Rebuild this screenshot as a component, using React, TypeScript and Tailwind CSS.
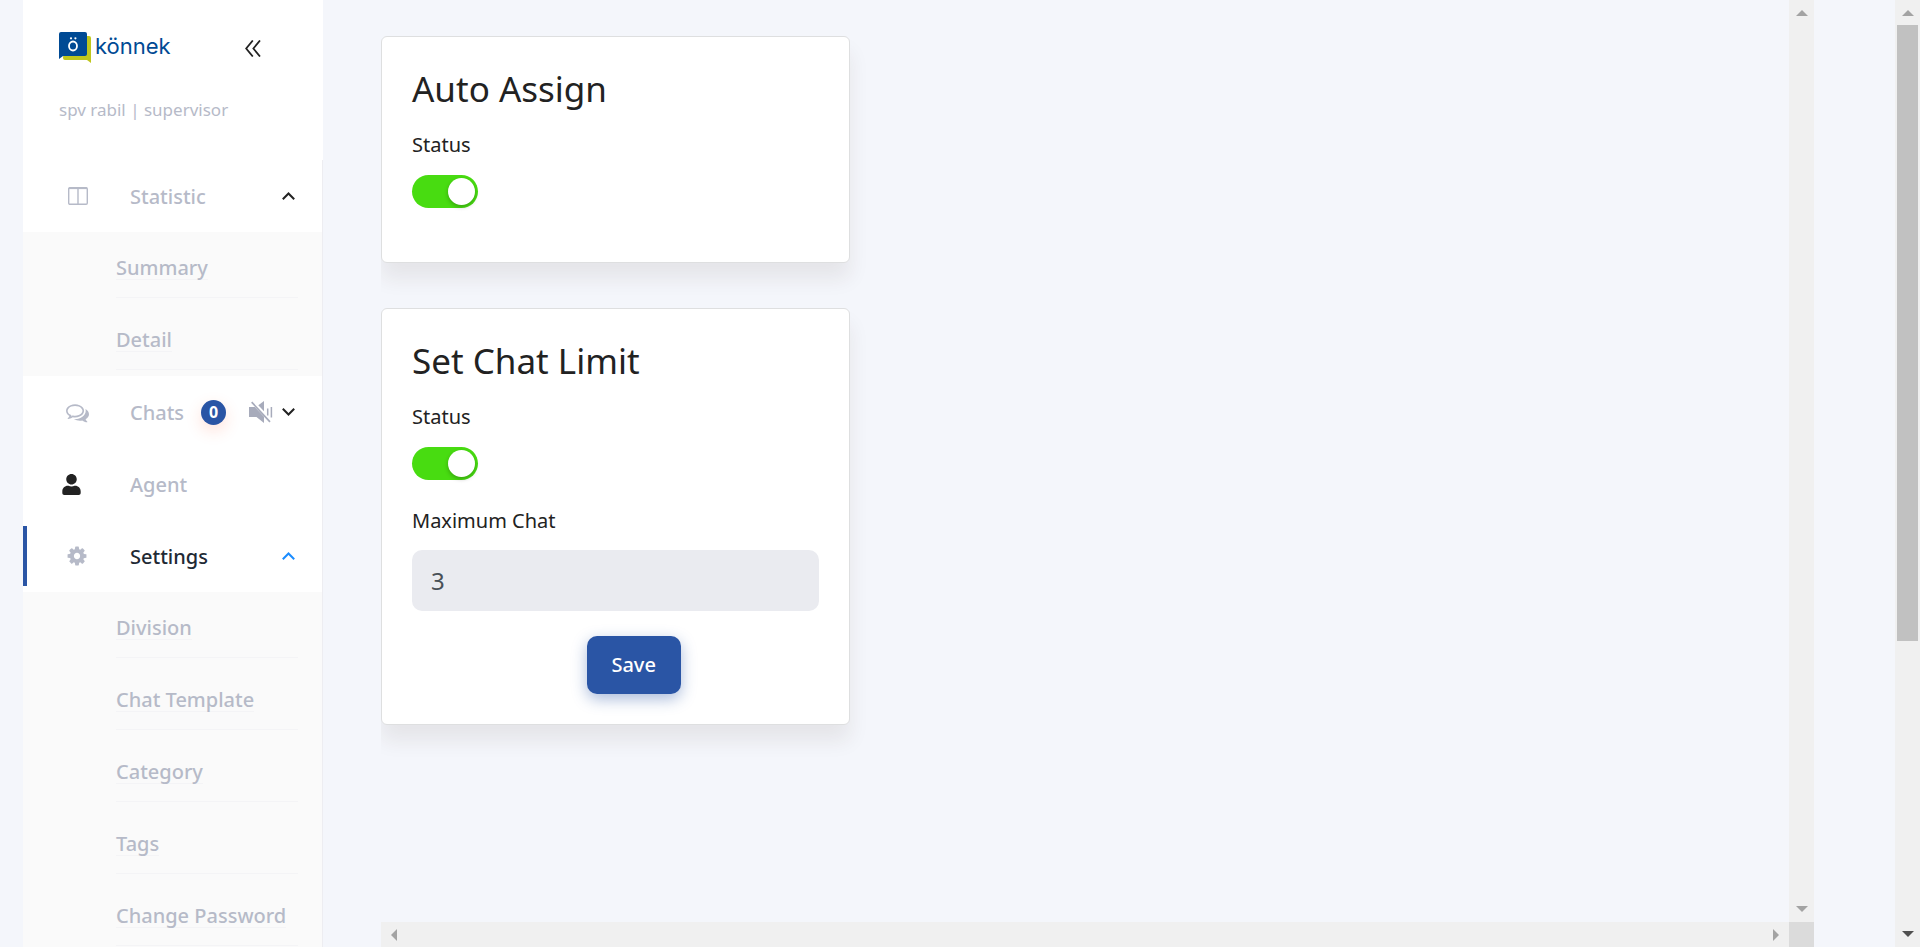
import { useState, type ReactNode } from "react";
import { FaUser } from "react-icons/fa";

function Logo() {
  return (
    <a href="#home" aria-label="könnek" className="flex items-start gap-1 text-[#004a94]">
      <svg width="32" height="32" viewBox="0 0 32 32" aria-hidden="true">
        <path d="M6 4h24a2 2 0 0 1 2 2v25l-4-3H6a2 2 0 0 1-2-2z" fill="#bfc61d" />
        <path d="M2 0h24a2 2 0 0 1 2 2v20a2 2 0 0 1-2 2H4l-4 3V2a2 2 0 0 1 2-2z" fill="#004a94" />
        <ellipse cx="14" cy="14" rx="4" ry="4.5" fill="none" stroke="#fff" strokeWidth="1.8" />
        <circle cx="12" cy="6.3" r="1.1" fill="#fff" />
        <circle cx="16.4" cy="6.3" r="1.1" fill="#fff" />
      </svg>
      <span className="font-[Inter,sans-serif] text-[22px] leading-7">könnek</span>
    </a>
  );
}

function ColumnsIcon() {
  return (
    <svg width="20" height="18" viewBox="0 0 20 18" fill="none" stroke="currentColor" aria-hidden="true">
      <rect x="0.7" y="0.7" width="18.6" height="16.6" rx="1.2" strokeWidth="1.4" />
      <path d="M1 1.2h18" strokeWidth="1.8" />
      <path d="M10 1v16" strokeWidth="1.4" />
    </svg>
  );
}

function CommentsIcon() {
  return (
    <svg width="23" height="23" viewBox="0 0 1792 1792" fill="currentColor" aria-hidden="true">
      <path d="M704 384q-153 0-286 52t-211.5 141-78.5 191q0 82 53 158t149 132l97 56-35 84q34-20 62-39l44-31 53 10q78 14 153 14 153 0 286-52t211.5-141 78.5-191-78.5-191-211.5-141-286-52zm0-128q191 0 353.5 68.5t256.5 186.5 94 257-94 257-256.5 186.5-353.5 68.5q-86 0-176-16-124 88-278 128-36 9-86 16h-3q-11 0-20.5-8t-11.5-21q-1-3-1-6.5t.5-6.5 2-6l2.5-5 3.5-5.500 4-5 4.500-5 4-4.500q5-6 23-25t26-29.500 22.500-29 25-38.500 20.500-44q-124-72-195-177t-71-224q0-139 94-257t256.500-186.500 353.500-68.500zm822 1169q10 24 20.500 44t25 38.500 22.500 29 26 29.500 23 25q1 1 4 4.500t4.500 5 4 5 3.500 5.500l2.500 5 2 6 .5 6.500-1 6.500q-3 14-13 22t-22 7q-50-7-86-16-154-40-278-128-90 16-176 16-271 0-472-132 58 4 88 4 161 0 309-45t264-129q125-92 192-212t67-254q0-77-23-152 129 71 204 178t75 230q0 120-71 224.500t-195 176.500z" />
    </svg>
  );
}

function CogIcon() {
  return (
    <svg width="22" height="22" viewBox="0 0 1792 1792" fill="currentColor" aria-hidden="true">
      <path d="M1152 896q0-106-75-181t-181-75-181 75-75 181 75 181 181 75 181-75 75-181zm512-109v222q0 12-8 23t-20 13l-185 28q-19 54-39 91 35 50 107 138 10 12 10 25t-9 23q-27 37-99 108t-94 71q-12 0-26-9l-138-108q-44 23-91 38-16 136-29 186-7 28-36 28h-222q-14 0-24.5-8.5t-11.5-21.5l-28-184q-49-16-90-37l-141 107q-10 9-25 9-14 0-25-11-126-114-165-168-7-10-7-23 0-12 8-23 15-21 51-66.5t54-70.5q-27-50-41-99l-183-27q-13-2-21-12.5t-8-23.5v-222q0-12 8-23t19-13l186-28q14-46 39-92-40-57-107-138-10-12-10-24 0-10 9-23 26-36 98.5-107.5t94.5-71.5q13 0 26 10l138 107q44-23 91-38 16-136 29-186 7-28 36-28h222q14 0 24.5 8.5t11.5 21.5l28 184q49 16 90 37l142-107q9-9 24-9 13 0 25 10 129 119 165 170 7 8 7 22 0 12-8 23-15 21-51 66.5t-54 70.5q26 50 41 98l183 28q13 2 21 12.5t8 23.5z" />
    </svg>
  );
}

function MuteIcon() {
  return (
    <svg width="24" height="22" viewBox="0 0 24 22" fill="currentColor" aria-hidden="true">
      <path d="M0 6h5.800L15 15.800V22l-7.500-6H0z" />
      <path d="M9.300 4.200 15 0v10.200z" />
      <path d="M2.700 1.200 21 20.800" fill="none" stroke="currentColor" strokeWidth="1.700" />
      <path d="M18.700 7.500v7M22.400 6v10.500" fill="none" stroke="currentColor" strokeWidth="1.500" />
    </svg>
  );
}

function Caret({ up = false }: { up?: boolean }) {
  return (
    <svg width="13" height="8" viewBox="0 0 13 8" fill="none" stroke="currentColor" strokeWidth="2" aria-hidden="true">
      <path d={up ? "M0.8 7.2 6.5 1.5l5.7 5.7" : "M0.8 0.8 6.5 6.5l5.7-5.7"} />
    </svg>
  );
}

type RowProps = { icon: ReactNode; label: string; active?: boolean; extra?: ReactNode; caret?: ReactNode };

function MenuRow({ icon, label, active = false, extra, caret }: RowProps) {
  return (
    <a
      href={`#${label.toLowerCase()}`}
      className={`my-1.5 flex h-[60px] items-center border-l-4 pr-[27px] ${
        active ? "border-[#2a55a5] text-[#212934]" : "border-transparent text-[#b6bac8]"
      }`}
    >
      <span className="flex w-[103px] shrink-0 items-center text-[#b6bac8]">{icon}</span>
      <span className="pt-0.5 font-medium">{label}</span>
      {extra}
      <span className={`ml-auto ${active ? "text-[#1a8cff]" : "text-[#222]"}`}>{caret}</span>
    </a>
  );
}

function SubMenu({ items }: { items: string[] }) {
  return (
    <ul className="bg-[#fafafa] pr-6 pl-[93px]">
      {items.map((item) => (
        <li key={item} className="py-1.5">
          <a
            href={`#${item.toLowerCase().replace(" ", "-")}`}
            className="flex h-[60px] items-center border-b border-[#f4f4f6] font-medium text-[#b6bac8]"
          >
            <span className="border-b border-[#f4f4f6] pt-0.5 leading-[22px]">{item}</span>
          </a>
        </li>
      ))}
    </ul>
  );
}

function Toggle({ id }: { id: string }) {
  const [on, setOn] = useState(true);
  return (
    <input
      id={id}
      type="checkbox"
      role="switch"
      checked={on}
      onChange={() => setOn(!on)}
      className="mt-[15px] flex h-[33px] w-[66px] cursor-pointer appearance-none items-center rounded-full bg-gray-300 p-[3px] before:size-[27px] before:rounded-full before:bg-white before:shadow-[0_2px_4px_rgba(0,0,0,0.25)] checked:justify-end checked:bg-[#48dc11]"
    />
  );
}

function Card({ title, children }: { title: string; children: ReactNode }) {
  return (
    <section className="w-1/3 rounded-md border border-[#dedfe0] bg-white p-[30px] shadow-[0_16px_20px_rgba(58,32,28,0.08)]">
      <h2 className="text-[35px] leading-[44px]">{title}</h2>
      {children}
    </section>
  );
}

function Arrow({ className }: { className: string }) {
  return (
    <svg width="12" height="12" viewBox="0 -3 12 12" fill="currentColor" aria-hidden="true" className={className}>
      <path d="M0 6 6 0l6 6z" />
    </svg>
  );
}

export default function App() {
  const [limit, setLimit] = useState("3");
  return (
    <div className="flex h-screen overflow-hidden bg-[#f4f6fb] font-['Noto_Sans',sans-serif] text-xl text-[#222]">
      <aside className="ml-[23px] w-[300px] shrink-0 overflow-hidden bg-white">
        <header className="h-40 pt-8 pl-9">
          <div className="flex h-[33px] items-start justify-between pr-[62px]">
            <Logo />
            <button type="button" aria-label="Collapse menu" className="mt-2">
              <svg width="16" height="17" viewBox="0 0 16 17" fill="none" stroke="#222" strokeWidth="1.8">
                <path d="M7.800.5 1.200 8.500l6.600 8M15 .5 8.400 8.500l6.600 8" />
              </svg>
            </button>
          </div>
          <p className="mt-[33px] text-[17px] leading-6 text-[#b6bac8]">spv rabil | supervisor</p>
        </header>
        <nav className="flex flex-col border-r border-[#ededf1]">
          <MenuRow icon={<span className="ml-[41px]"><ColumnsIcon /></span>} label="Statistic" caret={<Caret up />} />
          <SubMenu items={["Summary", "Detail"]} />
          <MenuRow
            icon={<span className="ml-[39px]"><CommentsIcon /></span>}
            label="Chats"
            extra={
              <>
                <span className="ml-[17px] flex size-[25px] items-center justify-center rounded-full bg-[#2a55a5] text-base font-bold text-white shadow-[0_6px_16px_rgba(255,90,50,0.18)]">
                  0
                </span>
                <span className="ml-[23px] text-[#a7abbb]"><MuteIcon /></span>
              </>
            }
            caret={<Caret />}
          />
          <MenuRow icon={<FaUser size={21} className="ml-[34px] text-[#222]" />} label="Agent" />
          <MenuRow icon={<span className="ml-[39px]"><CogIcon /></span>} label="Settings" active caret={<Caret up />} />
          <SubMenu items={["Division", "Chat Template", "Category", "Tags", "Change Password"]} />
        </nav>
      </aside>

      <div className="mr-[81px] ml-[58px] flex min-w-0 flex-1 flex-col overflow-hidden">
        <div className="flex min-h-0 flex-1">
          <main className="flex flex-1 flex-col gap-[45px] overflow-hidden pt-9">
            <Card title="Auto Assign">
              <label htmlFor="auto-assign" className="mt-[19px] block leading-[30px]">Status</label>
              <Toggle id="auto-assign" />
              <div className="h-6" />
            </Card>
            <Card title="Set Chat Limit">
              <label htmlFor="chat-limit" className="mt-[19px] block leading-[30px]">Status</label>
              <Toggle id="chat-limit" />
              <label htmlFor="maximum-chat" className="mt-[26px] block leading-[30px]">Maximum Chat</label>
              <input
                id="maximum-chat"
                type="text"
                inputMode="numeric"
                value={limit}
                onChange={(e) => setLimit(e.target.value)}
                className="mt-3.5 block h-[61px] w-full rounded-[10px] bg-[#eaebf0] px-[19px] text-2xl text-[#495057]"
              />
              <div className="mt-[25px] flex justify-center pl-9">
                <button
                  type="button"
                  className="h-[58px] w-[94px] rounded-[10px] bg-[#2a55a5] font-medium text-white shadow-[0_5px_15px_rgba(42,85,165,0.4)]"
                >
                  Save
                </button>
              </div>
            </Card>
          </main>
          <div className="flex w-[25px] flex-col items-center justify-between bg-[#f0f0f0] py-[7px] text-[#a3a3a3]">
            <Arrow className="" />
            <Arrow className="rotate-180" />
          </div>
        </div>
        <div className="flex h-[25px] shrink-0 bg-[#f0f0f0]">
          <div className="flex flex-1 items-center justify-between px-[7px] text-[#a3a3a3]">
            <Arrow className="-rotate-90" />
            <Arrow className="rotate-90" />
          </div>
          <div className="w-[25px] bg-[#dbdbdb]" />
        </div>
      </div>

      <div className="flex w-[25px] shrink-0 flex-col items-center bg-[#f0f0f0] py-[7px]">
        <Arrow className="mb-1.5 shrink-0 text-[#a3a3a3]" />
        <div className="h-[66%] w-[21px] bg-[#c1c1c1]" />
        <Arrow className="mt-auto shrink-0 rotate-180 text-[#505050]" />
      </div>
    </div>
  );
}
